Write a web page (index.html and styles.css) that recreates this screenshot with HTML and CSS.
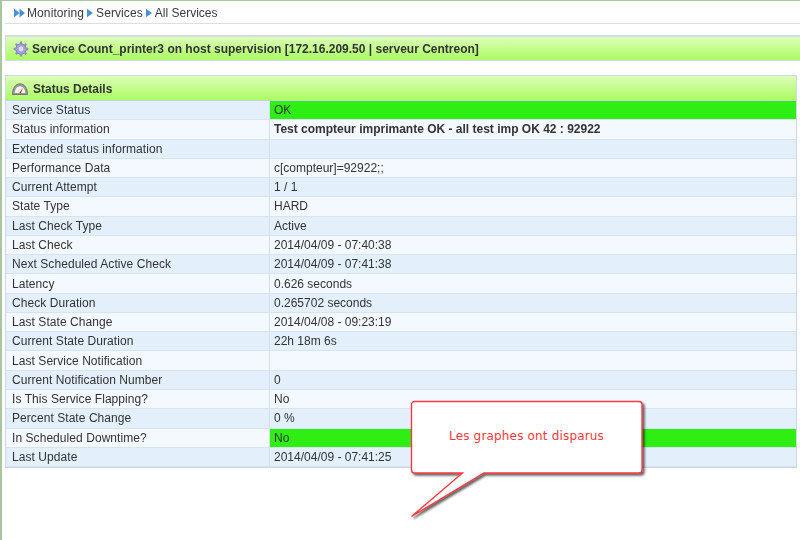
FILE: index.html
```html
<!DOCTYPE html>
<html lang="en">
<head>
<meta charset="utf-8">
<title>Service Details</title>
<link rel="stylesheet" href="styles.css">
</head>
<body>
<div class="page">
  <nav class="crumbs">
    <svg class="crumb-icon first" viewBox="0 0 12 10"><path d="M0 0l6 5-6 5zM6 0l6 5-6 5z"/></svg><span class="crumb-wide">Monitoring</span>
    <svg class="crumb-icon" viewBox="0 0 7 10"><path d="M0 0l7 5-7 5z"/></svg><span class="crumb-wide">Services</span>
    <svg class="crumb-icon" viewBox="0 0 7 10"><path d="M0 0l7 5-7 5z"/></svg><span>All Services</span>
  </nav>
  <header class="banner">
    <svg class="head-icon" viewBox="0 0 16 16">
      <circle cx="8" cy="8" r="5.2" fill="#9a9ad0" stroke="#7c7cb4"/>
      <g stroke="#9090c6" stroke-width="2.4"><path d="M8 .6v14.8M.6 8h14.8M2.8 2.8l10.4 10.4M13.2 2.8L2.8 13.2"/></g>
      <circle cx="8" cy="8" r="4.6" fill="#a4a4d8"/>
      <circle cx="8" cy="8" r="2.4" fill="#dcdcf0"/>
    </svg>
    <h1>Service Count_printer3 on host supervision [172.16.209.50 | serveur Centreon]</h1>
  </header>
  <section class="details">
    <h2 class="details-head">
      <svg class="head-icon" viewBox="0 0 16 12">
        <path d="M.5 11.500C.5 5 3.500.8 8 .8s7.500 4.200 7.500 10.700z" fill="#999" stroke="#777"/>
        <path d="M2.800 10C2.800 6 5 3.200 8 3.200S13.200 6 13.200 10z" fill="#f4f0ee"/>
        <path d="M7.300 10L11 4.500 8.800 10.500z" fill="#d22"/>
      </svg>
      Status Details
    </h2>
    <div class="rows">
      <div class="row a"><div class="k">Service Status</div><div class="v ok">OK</div></div>
      <div class="row b"><div class="k">Status information</div><div class="v strong">Test compteur imprimante OK - all test imp OK 42 : 92922</div></div>
      <div class="row a"><div class="k">Extended status information</div><div class="v"></div></div>
      <div class="row b"><div class="k">Performance Data</div><div class="v">c[compteur]=92922;;</div></div>
      <div class="row a"><div class="k">Current Attempt</div><div class="v">1 / 1</div></div>
      <div class="row b"><div class="k">State Type</div><div class="v">HARD</div></div>
      <div class="row a"><div class="k">Last Check Type</div><div class="v">Active</div></div>
      <div class="row b"><div class="k">Last Check</div><div class="v">2014/04/09 - 07:40:38</div></div>
      <div class="row a"><div class="k">Next Scheduled Active Check</div><div class="v">2014/04/09 - 07:41:38</div></div>
      <div class="row b"><div class="k">Latency</div><div class="v">0.626 seconds</div></div>
      <div class="row a"><div class="k">Check Duration</div><div class="v">0.265702 seconds</div></div>
      <div class="row b"><div class="k">Last State Change</div><div class="v">2014/04/08 - 09:23:19</div></div>
      <div class="row a"><div class="k">Current State Duration</div><div class="v">22h 18m 6s</div></div>
      <div class="row b"><div class="k">Last Service Notification</div><div class="v"></div></div>
      <div class="row a"><div class="k">Current Notification Number</div><div class="v">0</div></div>
      <div class="row b"><div class="k">Is This Service Flapping?</div><div class="v">No</div></div>
      <div class="row a"><div class="k">Percent State Change</div><div class="v">0 %</div></div>
      <div class="row b"><div class="k">In Scheduled Downtime?</div><div class="v ok">No</div></div>
      <div class="row a"><div class="k">Last Update</div><div class="v">2014/04/09 - 07:41:25</div></div>
    </div>
  </section>
</div>
<aside class="callout">
  <svg class="callout-shape" viewBox="0 0 240 124">
    <defs>
      <filter id="callout-shadow" x="-10%" y="-10%" width="120%" height="120%">
        <feDropShadow dx="2" dy="2" stdDeviation=".8" flood-color="#000" flood-opacity=".6"/>
      </filter>
    </defs>
    <path d="M4.500 1.500H229a3 3 0 0 1 3 3V70a3 3 0 0 1-3 3H74L1.500 116.500 52.500 73H4.500a3 3 0 0 1-3-3V4.500a3 3 0 0 1 3-3z" fill="#fff" stroke="#f53b42" stroke-width="1.400" filter="url(#callout-shadow)"/>
  </svg>
  <p class="callout-text">Les graphes ont disparus</p>
</aside>
</body>
</html>
```

FILE: styles.css
```css
html, body {
  margin: 0;
  padding: 0;
  background: #fff;
}
body {
  width: 800px;
  height: 540px;
  overflow: hidden;
  position: relative;
  font-family: "Liberation Sans", Arial, sans-serif;
  font-size: 12px;
  color: #333;
}
.page {
  box-sizing: border-box;
  height: 540px;
  border-top: 1px solid #aac69e;
  border-left: 2px solid #aac69e;
  padding-left: 3px;
  filter: blur(.3px);
}
.crumbs {
  display: flex;
  align-items: center;
  border-bottom: 1px solid #dedede;
  padding-left: 9px;
  padding-top: 1px;
  box-sizing: border-box;
  height: 23px;
  color: #3a3a3a;
}
.crumb-wide {
  letter-spacing: .1px;
}
.crumb-icon {
  width: 6px;
  height: 10px;
  margin: 0 3px 0 3px;
  fill: #4a90d9;
}
.crumb-icon.first {
  width: 11px;
  margin: 0 2px 0 0;
}
.banner {
  display: flex;
  align-items: center;
  gap: 3px;
  box-sizing: border-box;
  height: 26px;
  margin-top: 11px;
  padding: 1px 0 0 7px;
  border: 1px solid #d6dcec;
  border-top-width: 2px;
  border-right: 0;
  background: linear-gradient(#dcffb8, #abfb62);
}
h1, h2 {
  margin: 0;
  font-size: 12px;
  font-weight: bold;
  color: #333;
}
.head-icon {
  width: 16px;
  height: 16px;
  flex: none;
}
.details {
  box-sizing: border-box;
  width: 792px;
  margin-top: 14px;
  border: 1px solid #cdd6e8;
}
.details-head {
  display: flex;
  align-items: center;
  gap: 5px;
  height: 25px;
  padding: 1px 0 0 6px;
  background: linear-gradient(#dcffb8, #abfb62);
  border-bottom: 1px solid #c5d2e2;
  box-sizing: border-box;
}
.details-head .head-icon {
  height: 12px;
}
.rows {
  display: grid;
  grid-auto-rows: 19.280px;
}
.row {
  display: grid;
  grid-template-columns: 263px 1fr;
  border-bottom: 1px solid #d8e3f0;
  box-sizing: border-box;
}
.row.a { background: #e4effc; }
.row.b { background: #f4f8ff; }
.k, .v {
  display: flex;
  align-items: center;
}
.k {
  padding-left: 6px;
  letter-spacing: .06px;
}
.v {
  border-left: 1px solid #d4dfec;
  padding-left: 4px;
}
.strong {
  font-weight: bold;
}
.ok {
  background: #2eee14;
}
.callout {
  position: absolute;
  left: 410px;
  top: 400px;
  width: 240px;
  height: 124px;
}
.callout-shape {
  display: block;
  width: 240px;
  height: 124px;
}
.callout-text {
  position: absolute;
  left: 39px;
  top: 29px;
  margin: 0;
  font-family: "DejaVu Sans", sans-serif;
  font-size: 12px;
  letter-spacing: .17px;
  color: #f2383e;
  white-space: nowrap;
}
```
